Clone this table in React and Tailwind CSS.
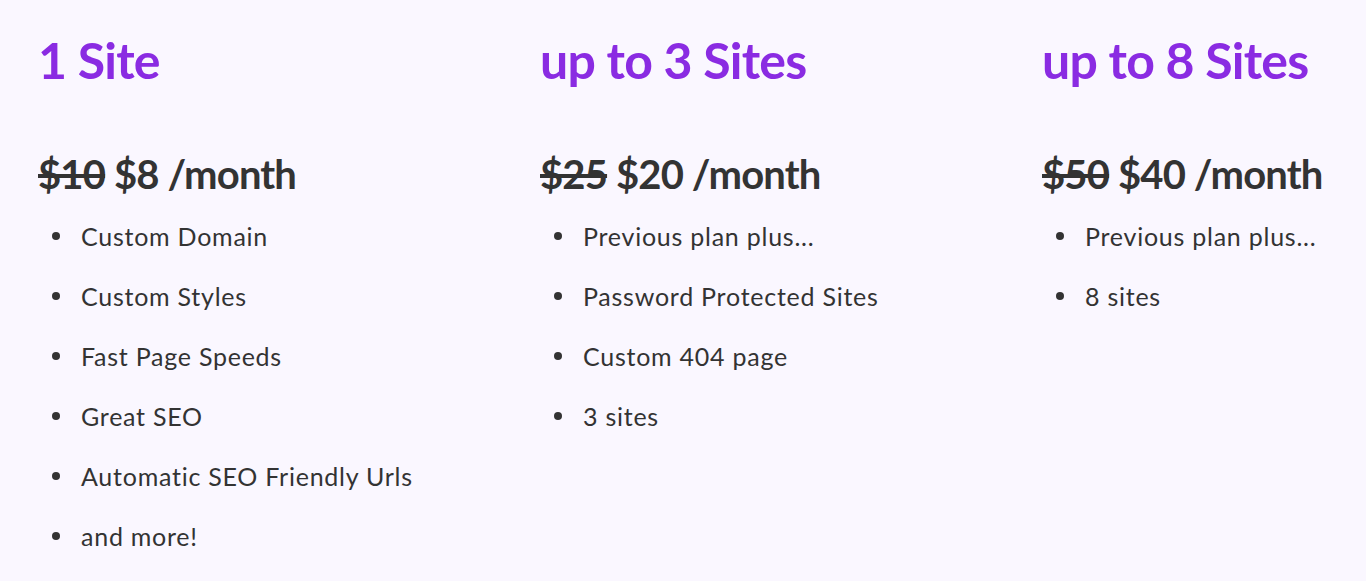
export default function App() {
  const plans = [
    { title: "1 Site", old: "$10", price: "$8", items: ["Custom Domain", "Custom Styles", "Fast Page Speeds", "Great SEO", "Automatic SEO Friendly Urls", "and more!"] },
    { title: "up to 3 Sites", old: "$25", price: "$20", items: ["Previous plan plus...", "Password Protected Sites", "Custom 404 page", "3 sites"] },
    { title: "up to 8 Sites", old: "$50", price: "$40", items: ["Previous plan plus...", "8 sites"] },
  ];
  return (
    <div className="w-[1366px] h-[581px] overflow-hidden bg-[#faf7ff] flex pl-[40px] text-[#333333]" style={{ fontFamily: "Lato, 'Open Sans', sans-serif" }}>
      {plans.map((p) => (
        <div key={p.title} className="w-[502px] shrink-0 pt-[30px]">
          <h2 className="text-[50px] leading-[60px] font-bold tracking-[-0.75px] text-[#8a2be2] -ml-[2px]">{p.title}</h2>
          <div className="mt-[60px] text-[40px] leading-[48px] font-bold tracking-[-0.85px] -ml-[2px]">
            <s>{p.old}</s> {p.price} /month
          </div>
          <ul className="pl-[12px] mt-[8px] text-[25px] leading-[60px] tracking-[0.75px]">
            {p.items.map((it) => (
              <li key={it} className="flex items-center">
                <span className="w-[8px] h-[8px] rounded-full bg-[#333333] shrink-0 mr-[21px]" />
                <span>{it}</span>
              </li>
            ))}
          </ul>
        </div>
      ))}
    </div>
  );
}
